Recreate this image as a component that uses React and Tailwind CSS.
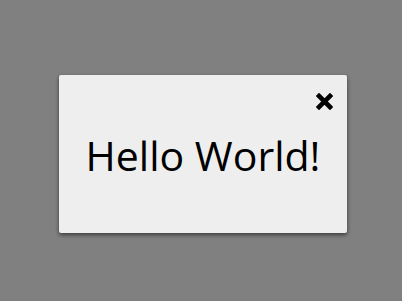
export default function App() {
  return (
    <div className="w-[402px] h-[301px] bg-[#808080] pl-[59px] pt-[75px]">
      <div className="relative w-[288px] h-[158px] bg-[#eeeeee] rounded-[2px] shadow-[0_2px_4px_rgba(0,0,0,0.55)] flex flex-col">
        <div className="flex justify-end pt-[18px] pr-[14px]">
          <svg width="17" height="17" viewBox="0 0 17 17">
            <path d="M3 3 L14 14 M14 3 L3 14" stroke="#000" strokeWidth="4.6" strokeLinecap="square" />
          </svg>
        </div>
        <div className="flex justify-center mt-[25px]">
          <span className="text-[41px] leading-none text-black" style={{ fontFamily: '"Open Sans", sans-serif' }}>
            Hello World!
          </span>
        </div>
      </div>
    </div>
  );
}
